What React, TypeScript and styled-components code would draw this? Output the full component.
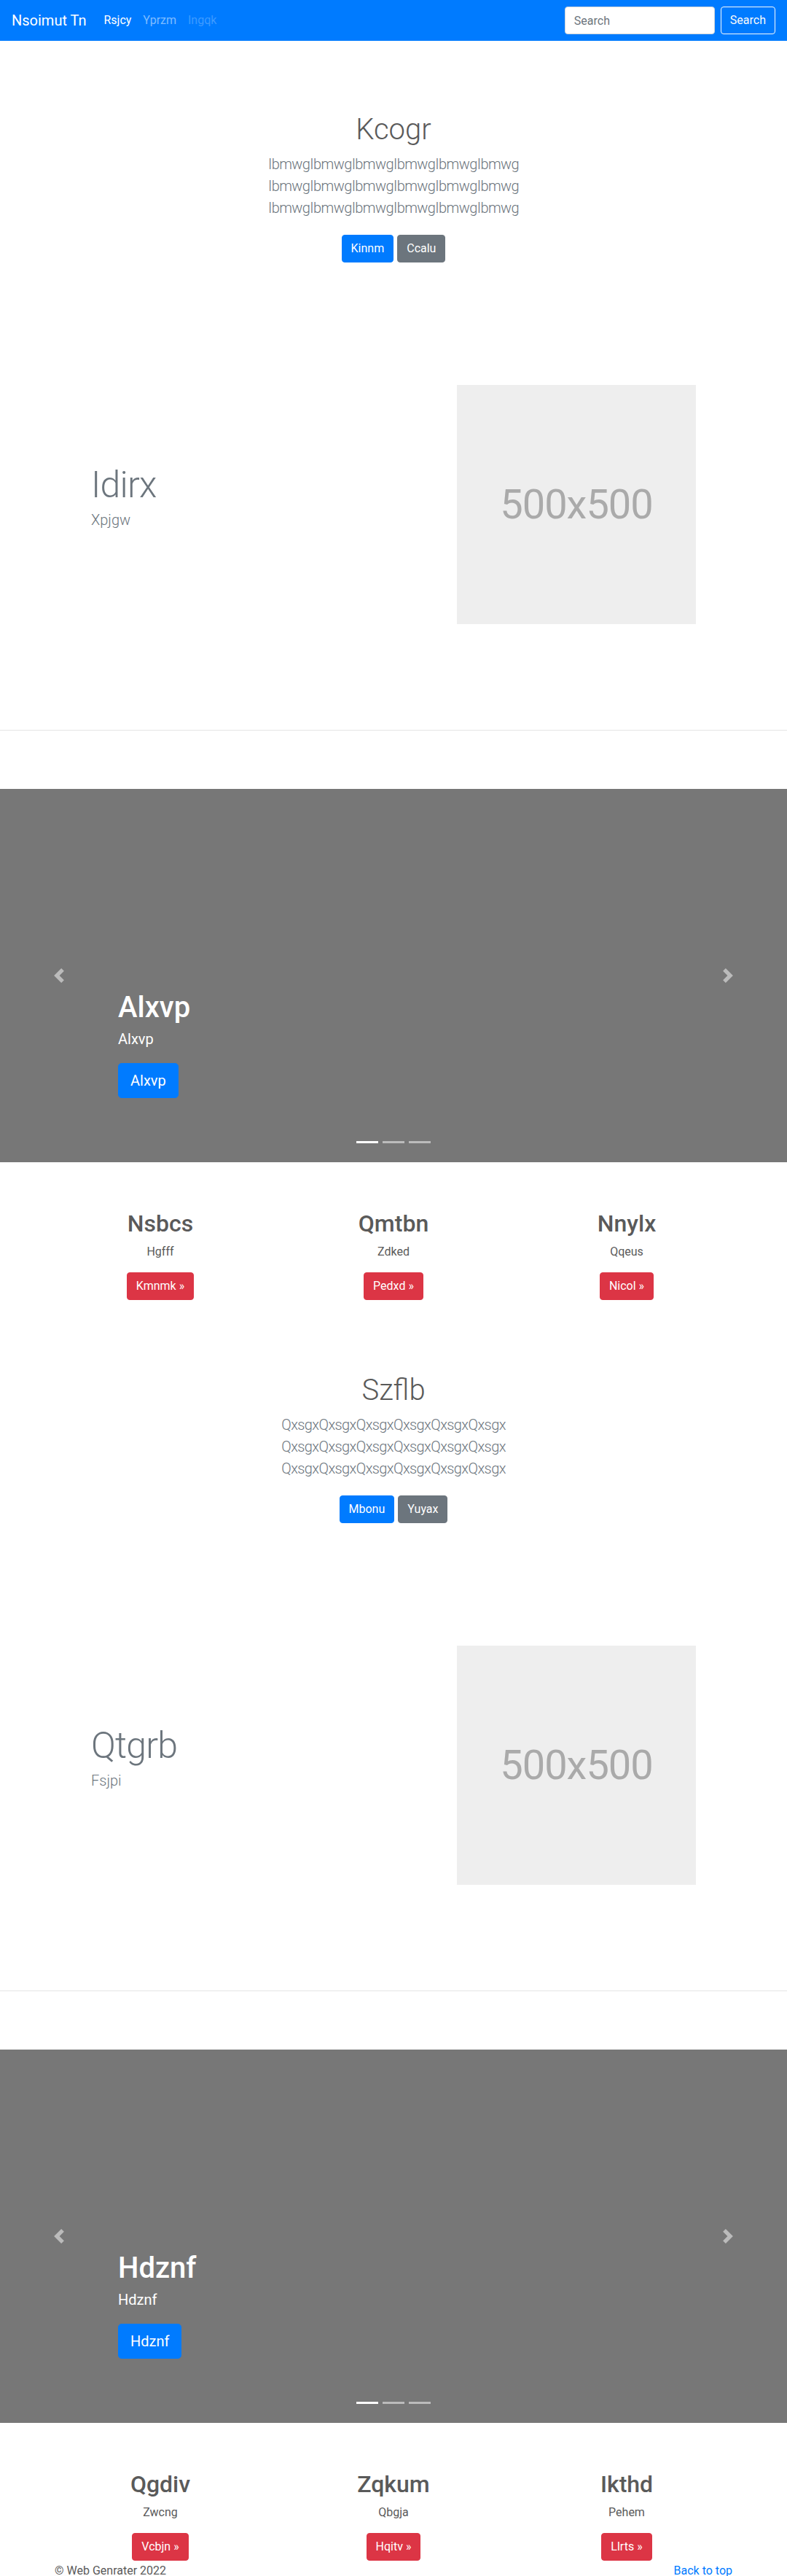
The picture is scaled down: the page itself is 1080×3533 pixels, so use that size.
import React from 'react';
import styled, { createGlobalStyle } from 'styled-components';

const GlobalStyle = createGlobalStyle`
  * {
    box-sizing: border-box;
  }

  body {
    margin: 0;
    font-family: "Segoe UI", Roboto, "Helvetica Neue", Arial, "Noto Sans", sans-serif;
    font-size: 16px;
    line-height: 1.5;
    color: #5a5a5a;
    background-color: #fff;
  }
`;

const Navbar = styled.nav`
  height: 56px;
  background-color: #007bff;
  display: flex;
  align-items: center;
  padding: 0 16px;
`;

const Brand = styled.a`
  font-size: 20px;
  line-height: 30px;
  color: #fff;
  margin-right: 16px;
  text-decoration: none;
`;

const NavLink = styled.a<{ $state?: 'active' | 'disabled' }>`
  padding: 0 8px;
  font-size: 16px;
  line-height: 24px;
  text-decoration: none;
  color: ${(p) =>
    p.$state === 'active'
      ? '#fff'
      : p.$state === 'disabled'
      ? 'rgba(255, 255, 255, 0.25)'
      : 'rgba(255, 255, 255, 0.5)'};
`;

const SearchForm = styled.form`
  margin-left: auto;
  display: flex;
  gap: 8px;
`;

const SearchInput = styled.input`
  width: 206px;
  height: 38px;
  padding: 6px 12px;
  font-family: inherit;
  font-size: 16px;
  color: #495057;
  background-color: #fff;
  border: 1px solid #ced4da;
  border-radius: 4px;

  &::placeholder {
    color: #6c757d;
  }
`;

const OutlineButton = styled.button`
  height: 38px;
  padding: 6px 12px;
  font-family: inherit;
  font-size: 16px;
  line-height: 24px;
  color: #f8f9fa;
  background-color: transparent;
  border: 1px solid #f8f9fa;
  border-radius: 4px;
`;

const colors = {
  primary: '#007bff',
  secondary: '#6c757d',
  danger: '#dc3545',
};

const Button = styled.a<{ $variant: keyof typeof colors; $large?: boolean }>`
  display: inline-block;
  padding: ${(p) => (p.$large ? '8px 16px' : '6px 12px')};
  font-size: ${(p) => (p.$large ? '20px' : '16px')};
  line-height: 1.5;
  color: #fff;
  text-decoration: none;
  background-color: ${(p) => colors[p.$variant]};
  border: 1px solid ${(p) => colors[p.$variant]};
  border-radius: ${(p) => (p.$large ? '4.8px' : '4px')};
`;

const Jumbotron = styled.section`
  padding: 98px 15px 0;
  text-align: center;
`;

const JumboTitle = styled.h1`
  margin: 0 0 8px;
  font-size: 40px;
  line-height: 48px;
  font-weight: 300;
  color: #5a5a5a;
`;

const Lead = styled.p`
  max-width: 450px;
  margin: 0 auto 22px;
  font-size: 20px;
  line-height: 30px;
  font-weight: 300;
  letter-spacing: -0.6px;
  color: #6c757d;
`;

const ButtonRow = styled.div`
  display: flex;
  justify-content: center;
  gap: 5px;
`;

const Featurette = styled.div`
  width: 830px;
  margin: 168px auto 0;
  display: grid;
  grid-template-columns: 1fr 328px;
  align-items: center;
`;

const FeatHeading = styled.h2`
  margin: 0 0 8px;
  font-size: 50px;
  line-height: 1;
  font-weight: 300;
  letter-spacing: -0.8px;
  color: #6c757d;
`;

const FeatLead = styled.p`
  margin: 0 0 16px;
  font-size: 20px;
  line-height: 30px;
  font-weight: 300;
  color: #6c757d;
`;

const Placeholder = styled.div`
  width: 328px;
  height: 328px;
  background-color: #eee;
  color: #aaa;
  display: flex;
  align-items: center;
  justify-content: center;
  font-size: 56px;
  letter-spacing: -1px;
`;

const Divider = styled.hr`
  margin: 145px 0 0;
  border: 0;
  border-top: 1px solid rgba(0, 0, 0, 0.1);
`;

const Carousel = styled.div`
  position: relative;
  height: 512px;
  margin-top: 80px;
  background-color: #777;
`;

const Control = styled.a<{ $side: 'left' | 'right' }>`
  position: absolute;
  top: 0;
  bottom: 0;
  ${(p) => p.$side}: 0;
  width: 15%;
  display: flex;
  align-items: center;
  justify-content: center;
  opacity: 0.5;
`;

const Indicators = styled.ol`
  position: absolute;
  left: 0;
  right: 0;
  bottom: 26px;
  margin: 0;
  padding: 0;
  list-style: none;
  display: flex;
  justify-content: center;
  gap: 6px;
`;

const Indicator = styled.li<{ $active?: boolean }>`
  width: 30px;
  height: 3px;
  background-color: #fff;
  opacity: ${(p) => (p.$active ? 1 : 0.5)};
`;

const Caption = styled.div`
  position: absolute;
  left: 15%;
  right: 15%;
  bottom: 48px;
  padding: 20px 0;
  color: #fff;
`;

const CaptionTitle = styled.h1`
  margin: 0 0 4px;
  font-size: 40px;
  line-height: 48px;
  font-weight: 500;
`;

const CaptionText = styled.p`
  margin: 0 0 18px;
  font-size: 20px;
  line-height: 30px;
`;

const CaptionAction = styled.div`
  margin-bottom: 20px;
`;

const Columns = styled.div`
  width: 960px;
  margin: 65px auto 0;
  padding-bottom: 2px;
  display: grid;
  grid-template-columns: repeat(3, 1fr);
  text-align: center;
`;

const ColHeading = styled.h2`
  margin: 0 0 8px;
  font-size: 32px;
  line-height: 38px;
  font-weight: 500;
  color: #5a5a5a;
`;

const ColText = styled.p`
  margin: 0 0 16px;
  font-size: 16px;
  line-height: 24px;
`;

const Footer = styled.footer`
  width: 930px;
  margin: 0 auto;
  display: flex;
  justify-content: space-between;
  font-size: 16px;
  line-height: 24px;
`;

const FooterLink = styled.a`
  color: #007bff;
  text-decoration: none;
`;

const Chevron = ({ dir }: { dir: 'left' | 'right' }) => (
  <svg width="20" height="20" viewBox="0 0 8 8" fill="#fff">
    {dir === 'left' ? (
      <path d="M5.25 0l-4 4 4 4 1.5-1.5-2.5-2.5 2.5-2.5-1.5-1.5z" />
    ) : (
      <path d="M2.75 0l-1.5 1.5 2.5 2.5-2.5 2.5 1.5 1.5 4-4-4-4z" />
    )}
  </svg>
);

type SectionData = {
  title: string;
  word: string;
  primary: string;
  secondary: string;
  feature: string;
  featureSub: string;
  slide: string;
  cols: { heading: string; text: string; action: string }[];
};

const sections: SectionData[] = [
  {
    title: 'Kcogr',
    word: 'Ibmwg',
    primary: 'Kinnm',
    secondary: 'Ccalu',
    feature: 'Idirx',
    featureSub: 'Xpjgw',
    slide: 'Alxvp',
    cols: [
      { heading: 'Nsbcs', text: 'Hgfff', action: 'Kmnmk' },
      { heading: 'Qmtbn', text: 'Zdked', action: 'Pedxd' },
      { heading: 'Nnylx', text: 'Qqeus', action: 'Nicol' },
    ],
  },
  {
    title: 'Szflb',
    word: 'Qxsgx',
    primary: 'Mbonu',
    secondary: 'Yuyax',
    feature: 'Qtgrb',
    featureSub: 'Fsjpi',
    slide: 'Hdznf',
    cols: [
      { heading: 'Qgdiv', text: 'Zwcng', action: 'Vcbjn' },
      { heading: 'Zqkum', text: 'Qbgja', action: 'Hqitv' },
      { heading: 'Ikthd', text: 'Pehem', action: 'Llrts' },
    ],
  },
];

const Section = ({ data }: { data: SectionData }) => {
  const line = data.word.repeat(6);
  return (
    <>
      <Jumbotron>
        <JumboTitle>{data.title}</JumboTitle>
        <Lead>{`${line} ${line} ${line}`}</Lead>
        <ButtonRow>
          <Button $variant="primary" href="#">{data.primary}</Button>
          <Button $variant="secondary" href="#">{data.secondary}</Button>
        </ButtonRow>
      </Jumbotron>

      <Featurette>
        <div>
          <FeatHeading>{data.feature}</FeatHeading>
          <FeatLead>{data.featureSub}</FeatLead>
        </div>
        <Placeholder>500x500</Placeholder>
      </Featurette>

      <Divider />

      <Carousel>
        <Indicators>
          <Indicator $active />
          <Indicator />
          <Indicator />
        </Indicators>
        <Caption>
          <CaptionTitle>{data.slide}</CaptionTitle>
          <CaptionText>{data.slide}</CaptionText>
          <CaptionAction>
            <Button $variant="primary" $large href="#">{data.slide}</Button>
          </CaptionAction>
        </Caption>
        <Control $side="left" href="#">
          <Chevron dir="left" />
        </Control>
        <Control $side="right" href="#">
          <Chevron dir="right" />
        </Control>
      </Carousel>

      <Columns>
        {data.cols.map((c) => (
          <div key={c.heading}>
            <ColHeading>{c.heading}</ColHeading>
            <ColText>{c.text}</ColText>
            <Button $variant="danger" href="#">{c.action} &raquo;</Button>
          </div>
        ))}
      </Columns>
    </>
  );
};

const App: React.FC = () => {
  return (
    <>
      <GlobalStyle />
      <Navbar>
        <Brand href="#">Nsoimut Tn</Brand>
        <NavLink $state="active" href="#">Rsjcy</NavLink>
        <NavLink href="#">Yprzm</NavLink>
        <NavLink $state="disabled" href="#">Ingqk</NavLink>
        <SearchForm>
          <SearchInput type="text" placeholder="Search" />
          <OutlineButton type="button">Search</OutlineButton>
        </SearchForm>
      </Navbar>

      {sections.map((s) => (
        <Section key={s.title} data={s} />
      ))}

      <Footer>
        <span>&copy; Web Genrater 2022</span>
        <FooterLink href="#">Back to top</FooterLink>
      </Footer>
    </>
  );
};

export default App;
